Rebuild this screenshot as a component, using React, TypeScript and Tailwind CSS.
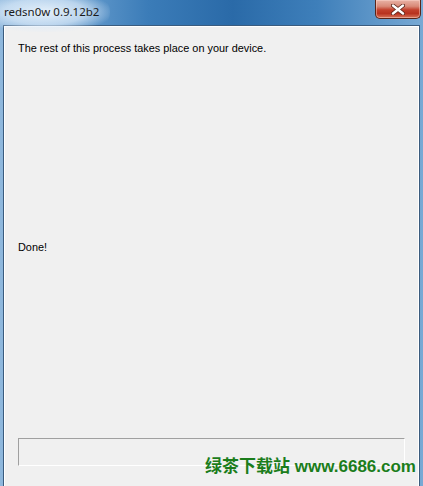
import React from "react";

const CloseButton = () => (
  <div className="absolute right-[2px] top-0 h-[19px] w-[46px] rounded-b-[5px] border border-t-0 border-[#5a2418] bg-[linear-gradient(to_bottom,#e9b3a6_0%,#d98a78_35%,#c2402c_55%,#b8321f_75%,#d8755a_100%)] shadow-[inset_0_0_0_1px_rgba(255,220,210,0.45)] flex items-center justify-center">
    <svg width="14" height="11" viewBox="0 0 14 11">
      <path d="M2 1.5 L12 9.5 M12 1.5 L2 9.5" stroke="#5a2418" strokeWidth="4" strokeLinecap="round" />
      <path d="M2 1.5 L12 9.5 M12 1.5 L2 9.5" stroke="#ffffff" strokeWidth="2.4" strokeLinecap="round" />
    </svg>
  </div>
);

export default function App() {
  return (
    <div className="relative w-[423px] h-[486px] overflow-hidden flex flex-col bg-[linear-gradient(to_right,#8fb8dd_0%,#6fa3d2_15%,#3b7cb8_35%,#2a6aa8_55%,#3e7fba_75%,#78a9d4_100%)] font-['Liberation_Sans',Arial,sans-serif]">
      {/* title bar */}
      <div className="relative h-[25px] shrink-0 flex items-center">
        <div className="absolute left-[-20px] top-[-8px] h-[40px] w-[130px] rounded-full bg-[radial-gradient(ellipse_at_center,rgba(235,244,252,0.95)_0%,rgba(220,235,250,0.7)_45%,rgba(200,225,245,0)_75%)]" />
        <span className="relative pl-[4px] pb-[2px] text-[11.5px] text-[#1a1a1a] font-['Noto_Sans',sans-serif]">redsn0w 0.9.12b2</span>
        <CloseButton />
      </div>

      {/* client area */}
      <div className="flex-1 mx-[3px] border border-b-0 border-[#3b5c7e] bg-[#f0f0f0] shadow-[inset_1px_1px_0_#ffffff,inset_-1px_0_0_#ffffff] flex flex-col pl-[14px] pr-[14px]">
        <p className="mt-[15px] text-[10.9px] leading-[14px] text-black">
          The rest of this process takes place on your device.
        </p>
        <p className="mt-[185px] text-[10.9px] leading-[14px] text-black">Done!</p>
        <div className="mt-[184px] h-[28px] w-[387px] border border-t-[#a0a0a0] border-l-[#a0a0a0] border-r-white border-b-white bg-[#f0f0f0]" />
      </div>

      {/* watermark */}
      <div className="absolute left-[205px] top-[456px] text-[17px] leading-[22px] font-bold text-[#1b7d1b] whitespace-nowrap font-['Liberation_Sans','Noto_Sans_CJK_SC',sans-serif]">
        绿茶下载站 www.6686.com
      </div>
    </div>
  );
}
